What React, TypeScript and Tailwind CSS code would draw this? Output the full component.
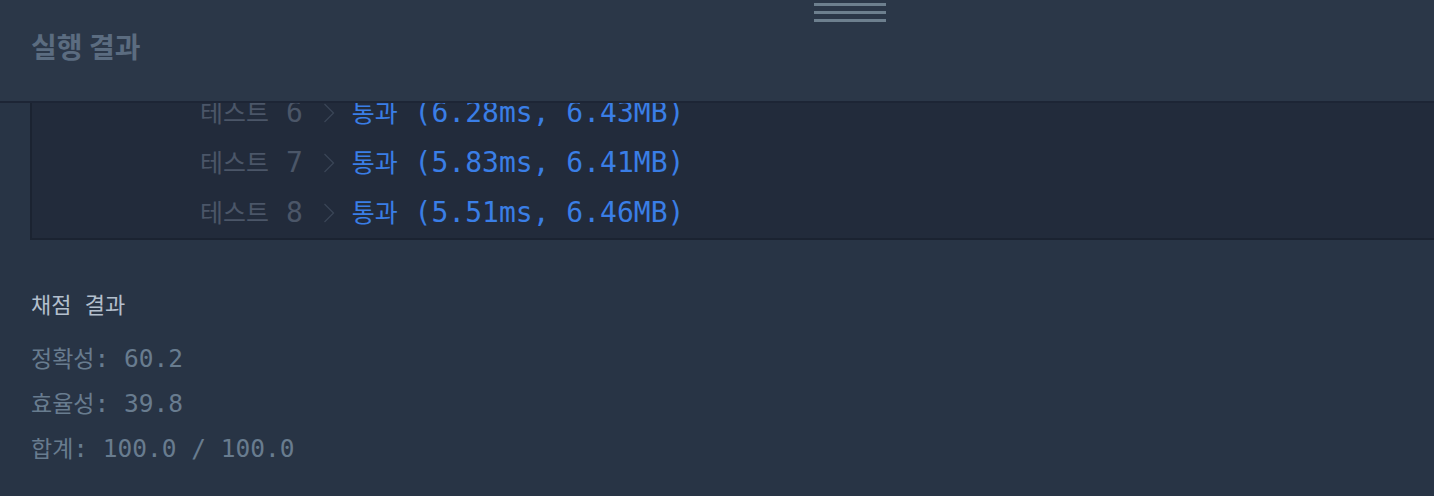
import React from "react";

const rows = [
  { n: 6, t: "6.28ms", m: "6.43MB" },
  { n: 7, t: "5.83ms", m: "6.41MB" },
  { n: 8, t: "5.51ms", m: "6.46MB" },
];

const mono = "font-['DejaVu_Sans_Mono','Noto_Sans_CJK_KR',monospace]";

function Chevron() {
  return (
    <svg width="12" height="20" viewBox="0 0 12 20" className="ml-[20px] mr-[17px] shrink-0">
      <path d="M1.5 1 L10.5 10 L1.5 19" fill="none" stroke="#3a4556" strokeWidth="1.3" />
    </svg>
  );
}

export default function App() {
  return (
    <div className="w-[1434px] h-[496px] bg-[#283445] overflow-hidden font-['Noto_Sans_CJK_KR','Noto_Sans',sans-serif]">
      <header className="relative z-10 h-[103px] bg-[#2b3748] border-b-2 border-[#1d2535] flex items-center px-[31px]">
        <div className="absolute left-[814px] top-[3px] w-[72px] flex flex-col gap-[5px]">
          <div className="h-[3px] bg-[#6d7f8e]" />
          <div className="h-[3px] bg-[#6d7f8e]" />
          <div className="h-[3px] bg-[#6d7f8e]" />
        </div>
        <h2 className="text-[28px] font-bold text-[#5b6c80] leading-none mt-[-10px]">실행 결과</h2>
      </header>

      <div className="h-[137px] overflow-hidden pl-[30px] flex flex-col justify-end">
        <div className="bg-[#222b3b] border-l-2 border-b-2 border-[#1b2331] pl-[168px]">
          {rows.map((r) => (
            <div key={r.n} className={`h-[50px] flex items-center text-[28px] ${mono} whitespace-pre`}>
              <span className="text-[#4b5668]">
                <span className="text-[25px]">테스트</span> {r.n}
              </span>
              <Chevron />
              <span className="text-[#3a7ee6]">
                <span className="text-[25px]">통과</span> ({r.t}, {r.m})
              </span>
            </div>
          ))}
        </div>
      </div>

      <section className={`px-[31px] pt-[50px] ${mono}`}>
        <h3 className="text-[22px] text-[#b3bfcd] h-[30px] flex items-center whitespace-pre">채점 결과</h3>
        <div className="mt-[17px] flex flex-col text-[#687c8f] text-[24.5px] whitespace-pre">
          <div className="h-[45px] flex items-center"><span className="text-[23px]">정확성</span>: 60.2</div>
          <div className="h-[45px] flex items-center"><span className="text-[23px]">효율성</span>: 39.8</div>
          <div className="h-[45px] flex items-center"><span className="text-[23px]">합계</span>: 100.0 / 100.0</div>
        </div>
      </section>
    </div>
  );
}
